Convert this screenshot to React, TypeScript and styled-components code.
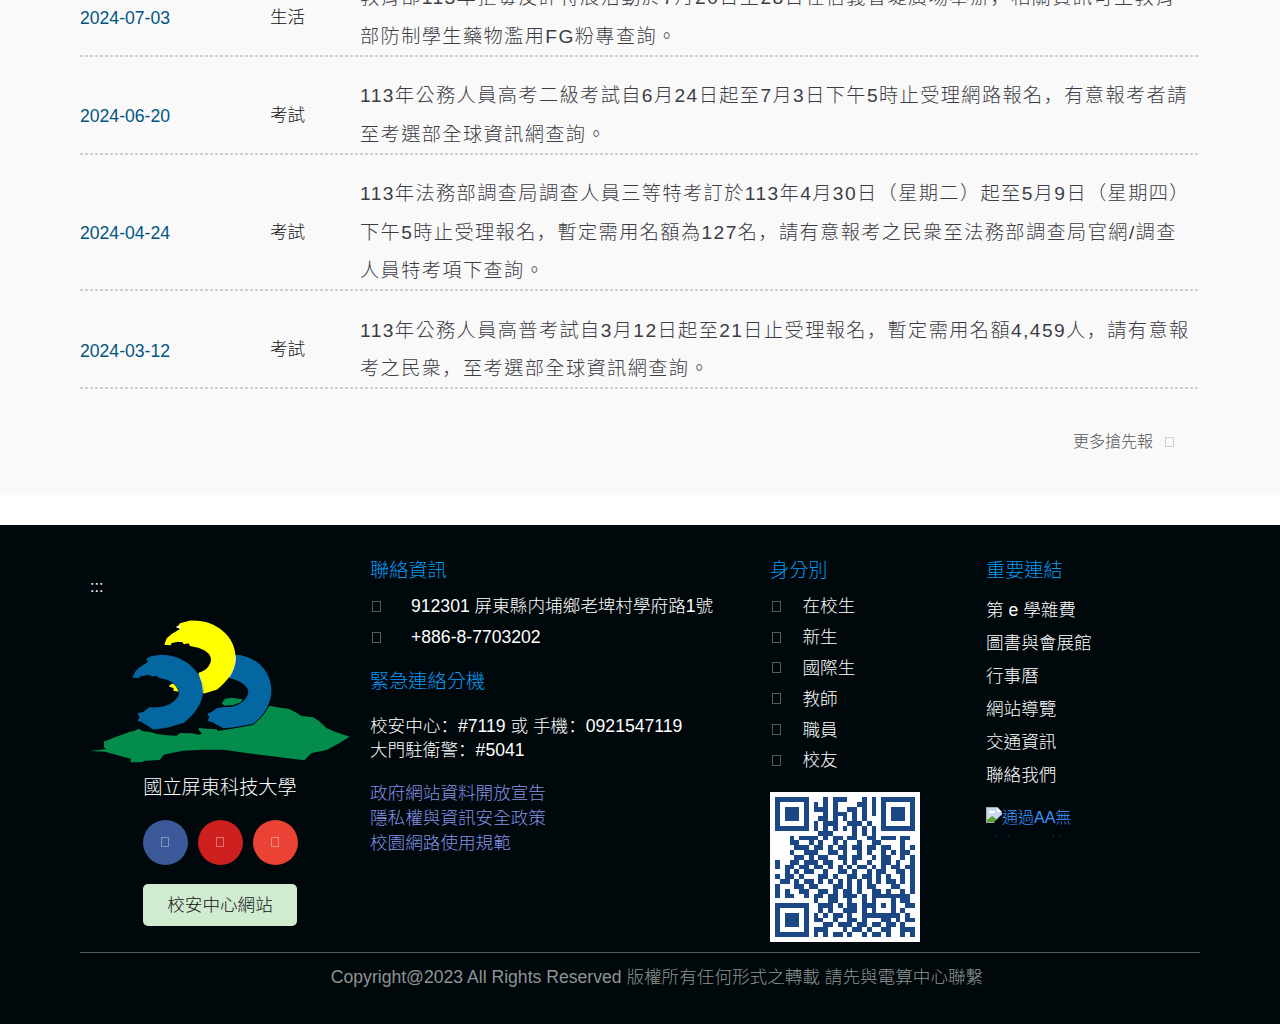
import React from "react";
import styled, { createGlobalStyle } from "styled-components";

const GlobalStyle = createGlobalStyle`
  * { box-sizing: border-box; }
  body {
    margin: 0;
    background: #fff;
    font-family: "Liberation Sans", "Noto Sans CJK TC", sans-serif;
    font-weight: 300;
    font-size: 17.6px;
  }
  ul { list-style: none; margin: 0; padding: 0; }
  a { color: inherit; text-decoration: none; }
`;

const Page = styled.div`
  height: 1024px;
  overflow: hidden;
  display: flex;
  flex-direction: column;
`;

const News = styled.section`
  height: 495px;
  flex: none;
  padding: 0 80px;
  background: #f9f9f9;
  overflow: hidden;
`;

const NewsList = styled.ul`
  margin-top: -41px;
`;

const NewsRow = styled.li`
  display: grid;
  grid-template-columns: 190px 90px 1fr;
  align-items: center;
  padding: 20.2px 0 1px;
  background: repeating-linear-gradient(90deg, #d0d0d0 0 3px, transparent 3px 5px) left bottom / 100% 2px no-repeat;
`;

const NewsDate = styled.time`
  color: #005580;
  padding-top: 2px;
`;

const Category = styled.span`
  color: #111;
  line-height: 24px;
  padding-bottom: 2px;
`;

const Headline = styled.a`
  font-size: 19.2px;
  line-height: 38.4px;
  letter-spacing: 1.4px;
  color: #3c3c44;
`;

const Line = styled.span`
  display: block;
  white-space: nowrap;
`;

const Mark = styled.span`
  font-family: "Noto Sans CJK SC", sans-serif;
  line-height: 1;
`;

const More = styled.a`
  display: flex;
  justify-content: flex-end;
  align-items: center;
  gap: 12px;
  margin-top: 41px;
  padding-right: 26px;
  font-size: 16px;
  line-height: 24px;
  color: #555;
`;

const Glyph = styled.span<{ $w: number; $h: number; $color: string }>`
  display: block;
  flex: none;
  width: ${(p) => p.$w}px;
  height: ${(p) => p.$h}px;
  border: 1px solid ${(p) => p.$color};
`;

const Footer = styled.footer`
  flex: 1;
  margin-top: 30px;
  padding: 0 80px;
  background: #00080b;
  color: #fff;
`;

const Columns = styled.div`
  display: grid;
  grid-template-columns: 280px 400px 216px 1fr;
  height: 428px;
  padding: 31px 0 0 10px;
  border-bottom: 1px solid #555b5d;
`;

const Brand = styled.div`
  width: 260px;
  display: flex;
  flex-direction: column;
  align-items: center;
`;

const AccessKey = styled.a`
  align-self: flex-start;
  font-size: 16px;
  line-height: 24px;
  margin: 19px 0 21px;
`;

const School = styled.div`
  margin-top: 10px;
  font-size: 19.2px;
  line-height: 29px;
`;

const Social = styled.div`
  display: flex;
  gap: 10px;
  margin-top: 17.5px;
`;

const Round = styled.a<{ $bg: string }>`
  width: 45px;
  height: 45px;
  border-radius: 50%;
  display: flex;
  align-items: center;
  justify-content: center;
  background: ${(p) => p.$bg};
`;

const SafetyButton = styled.a`
  margin-top: 19.5px;
  width: 154px;
  height: 42px;
  border-radius: 5px;
  background: #d0ebd0;
  color: #111;
  line-height: 42px;
  text-align: center;
`;

const Heading = styled.h3<{ $top?: number }>`
  margin: ${(p) => p.$top ?? 0}px 0 0;
  font-size: 19.2px;
  font-weight: 300;
  line-height: 30px;
  color: #0a9af0;
`;

const IconList = styled.ul<{ $gap: number; $top: number }>`
  margin-top: ${(p) => p.$top}px;
  li {
    display: flex;
    align-items: center;
    gap: ${(p) => p.$gap}px;
    height: 30.8px;
    line-height: 24px;
    padding-left: 2px;
    white-space: nowrap;
  }
`;

const Phones = styled.div`
  margin-top: 17px;
  line-height: 24.6px;
`;

const Policies = styled.div`
  margin-top: 18px;
  line-height: 25px;
  color: #8593e6;
`;

const QuickLinks = styled.ul`
  margin-top: 8px;
  line-height: 33px;
`;

const Qr = styled.svg`
  display: block;
  margin-top: 16px;
`;

const BadgeImage = styled.a`
  display: block;
  width: 86px;
  height: 31px;
  margin-top: 14px;
  overflow: hidden;
  font-size: 16px;
  line-height: 24px;
  color: #3d94ff;
  svg { vertical-align: 0; }
`;

const BadgeLine = styled.span`
  display: block;
  white-space: nowrap;
  & + & { line-height: 30px; }
`;

const Copyright = styled.p`
  margin: 0;
  padding: 11px 0 0 34px;
  text-align: center;
  line-height: 26px;
  color: #8f9394;
`;

/* Full-width commas and colons sit at the left of their cell. */
const Han = ({ children }: { children: string }) => (
  <>
    {children.split(/([，：])/).map((part, i) =>
      i % 2 ? <Mark key={i}>{part}</Mark> : part
    )}
  </>
);

const news = [
  {
    date: "2024-07-03",
    category: "生活",
    lines: [
      "教育部113年拒毒反詐特展活動於7月20日至28日在信義香堤廣場舉辦，相關資訊可至教育",
      "部防制學生藥物濫用FG粉專查詢。",
    ],
  },
  {
    date: "2024-06-20",
    category: "考試",
    lines: [
      "113年公務人員高考二級考試自6月24日起至7月3日下午5時止受理網路報名，有意報考者請",
      "至考選部全球資訊網查詢。",
    ],
  },
  {
    date: "2024-04-24",
    category: "考試",
    lines: [
      "113年法務部調查局調查人員三等特考訂於113年4月30日（星期二）起至5月9日（星期四）",
      "下午5時止受理報名，暫定需用名額為127名，請有意報考之民衆至法務部調查局官網/調查",
      "人員特考項下查詢。",
    ],
  },
  {
    date: "2024-03-12",
    category: "考試",
    lines: [
      "113年公務人員高普考試自3月12日起至21日止受理報名，暫定需用名額4,459人，請有意報",
      "考之民衆，至考選部全球資訊網查詢。",
    ],
  },
];

const identities = ["在校生", "新生", "國際生", "教師", "職員", "校友"];
const links = ["第 e 學雜費", "圖書與會展館", "行事曆", "網站導覽", "交通資訊", "聯絡我們"];

const qrRows = [
  "#######...#.###...#.#.#######",
  "#.....#.#.#.#....##.#.#.....#",
  "#.###.#.###.#..##.#.#.#.###.#",
  "#.###.#...#.###.#.#.#.#.###.#",
  "#.###.#..##.#.#.#.#...#.###.#",
  "#.....#.#.###..###.#..#.....#",
  "#######.#.#.#.#.#.#.#.#######",
  ".........###....#.#.#........",
  "...#.####.#.##.##..##.###.##.",
  "...##..#.#..#.#..#..##....#..",
  "....###.##.#.##.##.##.##..#.#",
  "...#..###..##.#..#.#..#.#.##.",
  "....##.#.##..##.##..#.##..#.#",
  "#..##.###.##..#.#..#..##.#..#",
  "#.##.##.##.#.#.#.##.#.#.##.##",
  "..#.#.##..#..##.#..#.##..##.#",
  "#.##.#...##.#..##.##.#.#..#.#",
  ".##.#.##.#.#.#.#.#.#.#.##.#.#",
  "#...##.##...##.#.#.##...##..#",
  "#.#..##..##.#.##.#..##.#..#.#",
  "#.##..#.##.##.###.#.########.",
  "........#..##..#..#.#...#.##.",
  "#######..###.#.##.###.#.#..##",
  "#.....#..#.#..###.#.#...#.#..",
  "#.###.#.#.#.##.#..########.#.",
  "#.###.#.##..#..##.#...##.#.##",
  "#.###.#...##.###.##.##.##.#..",
  "#.....#.###...#.##.#..##..###",
  "#######.#.#.##.#..#.##.#..#.#",
];

const QrCode = () => (
  <Qr width="150" height="150" viewBox="-1.05 -1.05 31.1 31.1">
    <rect x="-1.05" y="-1.05" width="31.1" height="31.1" fill="#fdfdfd" />
    <path
      fill="#1c4785"
      shapeRendering="crispEdges"
      d={qrRows
        .map((row, y) =>
          [...row].map((c, x) => (c === "#" ? `M${x} ${y}h1v1h-1z` : "")).join("")
        )
        .join("")}
    />
  </Qr>
);

const Logo = () => (
  <svg width="260" height="143" viewBox="30 208 780 429">
    <path
      fill="#038c4b"
      d="M30 601L78 595 72 590V572L85 568 100 561 130 551 150 543 165 540 175 534 190 542 212 544 230 550 260 554 290 555 300 547 335 548 358 552 366 548 355 537 357 532 380 534 410 536 414 541 450 535 490 528 518 522 545 498 569 465 600 471 625 474 645 484 665 496 700 500 717 511 740 533 765 543 809 558 780 576 740 598 695 607 673 629 600 620 500 607 430 597 370 597 310 600 262 609 250 614 240 628 195 630 185 635H152V624L110 613 75 603Z"
    />
    <path fill="#038c4b" d="M426 456L435 444 455 441 488 446 483 455 460 463 435 465 427 461Z" />
    <path
      fill="#0567a1"
      stroke="#00080b"
      strokeWidth="5"
      paintOrder="stroke"
      d="M466 312C526 314 574 360 574 420C574 465 545 500 518 520C490 525 465 530 430 533L400 516 382 510 388 499 382 489 395 484 410 473C430 468 445 471 460 467C488 460 505 440 505 422C500 400 475 388 447 382Z"
    />
    <path
      fill="#ffff00"
      d="M253 282L260 263 275 250 299 236 292 228 300 218 328 210C405 205 466 255 467 320C467 360 440 395 410 417L370 429 356 366C380 360 393 342 393 325C391 308 375 298 355 291L330 286 326 278 312 281 304 272 275 277 272 284Z"
    />
    <path fill="#ffff00" d="M266 407L275 399 285 400 297 423 280 420 281 413Z" />
    <path
      fill="#0567a1"
      stroke="#00080b"
      strokeWidth="1"
      d="M157 382L165 363 178 350 204 333 197 325 212 317C290 295 368 350 370 422C368 462 340 495 311 517L260 532 220 537 188 516 172 510 178 499 172 488 190 483 208 469C235 471 260 468 278 454C291 445 298 434 296 421C290 400 265 386 235 382L230 376 218 378 205 373 180 378 177 383Z"
    />
    <path fill="none" stroke="#ffffd0" strokeWidth="2" d="M356 369Q370 395 370 426M467 318Q465 355 447 381" />
    <path fill="#fff" d="M290 227h12v5h-12zM297 271h8v3h-8z" />
  </svg>
);

const BrokenImage = () => (
  <svg width="16" height="16" viewBox="0 0 16 16">
    <path fill="#c9d9f2" stroke="#aaa" d="M.5.5h11l4 4v6l-5 5H.5z" />
    <path fill="#fff" d="M3 6a2 2 0 0 1 3-2 2 2 0 0 1 3 2zM11 1v4h4z" />
    <path fill="#55a532" d="M1 15v-2l5-4 3 2 2 3v1z" />
    <path stroke="#00080b" strokeWidth="2.5" d="M9 16l7-7" />
  </svg>
);

export default function App() {
  return (
    <Page>
      <GlobalStyle />
      <News>
        <NewsList>
          {news.map((item) => (
            <NewsRow key={item.date}>
              <NewsDate>{item.date}</NewsDate>
              <Category>{item.category}</Category>
              <Headline>
                {item.lines.map((line) => (
                  <Line key={line}><Han>{line}</Han></Line>
                ))}
              </Headline>
            </NewsRow>
          ))}
        </NewsList>
        <More>
          更多搶先報
          <Glyph $w={9} $h={10} $color="#d0d0d0" />
        </More>
      </News>
      <Footer>
        <Columns>
          <Brand>
            <AccessKey>:::</AccessKey>
            <Logo />
            <School>國立屏東科技大學</School>
            <Social>
              <Round $bg="#3b5998"><Glyph $w={8} $h={10} $color="#8394bd" /></Round>
              <Round $bg="#cd201f"><Glyph $w={8} $h={10} $color="#e07473" /></Round>
              <Round $bg="#ea4335"><Glyph $w={8} $h={10} $color="#f28b82" /></Round>
            </Social>
            <SafetyButton>校安中心網站</SafetyButton>
          </Brand>
          <div>
            <Heading>聯絡資訊</Heading>
            <IconList $gap={30} $top={5}>
              <li><Glyph $w={9} $h={11} $color="#555a5c" />912301 屏東縣内埔鄉老埤村學府路1號</li>
              <li><Glyph $w={9} $h={11} $color="#555a5c" />+886-8-7703202</li>
            </IconList>
            <Heading $top={14}>緊急連絡分機</Heading>
            <Phones>
              <Line><Han>校安中心：#7119 或 手機：0921547119</Han></Line>
              <Line><Han>大門駐衛警：#5041</Han></Line>
            </Phones>
            <Policies>
              <Line as="a">政府網站資料開放宣告</Line>
              <Line as="a">隱私權與資訊安全政策</Line>
              <Line as="a">校園網路使用規範</Line>
            </Policies>
          </div>
          <div>
            <Heading>身分別</Heading>
            <IconList $gap={21.5} $top={5}>
              {identities.map((name) => (
                <li key={name}><Glyph $w={9} $h={11} $color="#555a5c" />{name}</li>
              ))}
            </IconList>
            <QrCode />
          </div>
          <div>
            <Heading>重要連結</Heading>
            <QuickLinks>
              {links.map((name) => <li key={name}>{name}</li>)}
            </QuickLinks>
            <BadgeImage>
              <BadgeLine><BrokenImage />通過AA無</BadgeLine>
              <BadgeLine>障礙網頁檢</BadgeLine>
            </BadgeImage>
          </div>
        </Columns>
        <Copyright>Copyright@2023 All Rights Reserved 版權所有任何形式之轉載 請先與電算中心聯繫</Copyright>
      </Footer>
    </Page>
  );
}
